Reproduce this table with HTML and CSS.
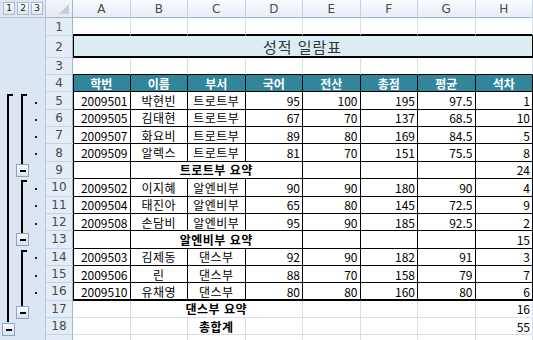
FILE: index.html
```html
<!DOCTYPE html>
<html lang="ko">
<head>
<meta charset="utf-8">
<title>성적 일람표</title>
<link rel="stylesheet" href="styles.css">
</head>
<body>
<div class="sheet">
  <!-- header row -->
  <div class="levels">
    <span class="lvl">1</span><span class="lvl">2</span><span class="lvl">3</span>
  </div>
  <div class="corner"><span class="tri"></span></div>
  <div class="ch">A</div><div class="ch">B</div><div class="ch">C</div><div class="ch">D</div>
  <div class="ch">E</div><div class="ch">F</div><div class="ch">G</div><div class="ch">H</div>

  <!-- outline drawing -->
  <div class="outline">
    <svg class="outline-svg" width="46" height="322" viewBox="0 0 46 322">
      <defs>
        <linearGradient id="btn" x1="0" y1="0" x2="0" y2="1">
          <stop offset="0" stop-color="#ffffff"/>
          <stop offset="1" stop-color="#d4e0ee"/>
        </linearGradient>
      </defs>
      <g fill="none" stroke="#000" stroke-width="2">
        <path d="M13 77 H8 V304"/>
        <path d="M27 77 H22 V146"/>
        <path d="M27 163 H22 V215"/>
        <path d="M27 233 H22 V288"/>
      </g>
      <g fill="#222">
        <rect x="35" y="84" width="2" height="2"/>
        <rect x="35" y="101" width="2" height="2"/>
        <rect x="35" y="118" width="2" height="2"/>
        <rect x="35" y="135" width="2" height="2"/>
        <rect x="35" y="170" width="2" height="2"/>
        <rect x="35" y="187" width="2" height="2"/>
        <rect x="35" y="205" width="2" height="2"/>
        <rect x="35" y="239" width="2" height="2"/>
        <rect x="35" y="257" width="2" height="2"/>
        <rect x="35" y="274" width="2" height="2"/>
      </g>
      <g>
        <rect x="16.5" y="146.5" width="12" height="12" fill="url(#btn)" stroke="#8aa4c4"/>
        <rect x="20" y="152" width="6" height="2" fill="#000"/>
        <rect x="16.5" y="215.5" width="12" height="12" fill="url(#btn)" stroke="#8aa4c4"/>
        <rect x="20" y="221" width="6" height="2" fill="#000"/>
        <rect x="16.5" y="288.5" width="12" height="12" fill="url(#btn)" stroke="#8aa4c4"/>
        <rect x="20" y="294" width="6" height="2" fill="#000"/>
        <rect x="2.5" y="305.5" width="12" height="12" fill="url(#btn)" stroke="#8aa4c4"/>
        <rect x="6" y="311" width="6" height="2" fill="#000"/>
      </g>
    </svg>
  </div>

  <!-- row 1 -->
  <div class="rh">1</div>
  <div class="c u2"></div><div class="c u2"></div><div class="c u2"></div><div class="c u2"></div>
  <div class="c u2"></div><div class="c u2"></div><div class="c u2"></div><div class="c u2"></div>

  <!-- row 2 -->
  <div class="rh">2</div>
  <div class="c title l k u2">성적 일람표</div>

  <!-- row 3 -->
  <div class="rh">3</div>
  <div class="c u"></div><div class="c u"></div><div class="c u"></div><div class="c u"></div>
  <div class="c u"></div><div class="c u"></div><div class="c u"></div><div class="c u"></div>

  <!-- row 4 -->
  <div class="rh">4</div>
  <div class="c hd l k u">학번</div><div class="c hd k u">이름</div><div class="c hd k u">부서</div><div class="c hd k u">국어</div>
  <div class="c hd k u">전산</div><div class="c hd k u">총점</div><div class="c hd k u">평균</div><div class="c hd k u">석차</div>

  <!-- row 5 -->
  <div class="rh">5</div>
  <div class="c r l k u">2009501</div><div class="c m k u">박현빈</div><div class="c m k u">트로트부</div><div class="c r k u">95</div>
  <div class="c r k u">100</div><div class="c r k u">195</div><div class="c r k u">97.5</div><div class="c r k u">1</div>

  <!-- row 6 -->
  <div class="rh">6</div>
  <div class="c r l k u">2009505</div><div class="c m k u">김태현</div><div class="c m k u">트로트부</div><div class="c r k u">67</div>
  <div class="c r k u">70</div><div class="c r k u">137</div><div class="c r k u">68.5</div><div class="c r k u">10</div>

  <!-- row 7 -->
  <div class="rh">7</div>
  <div class="c r l k u">2009507</div><div class="c m k u">화요비</div><div class="c m k u">트로트부</div><div class="c r k u">89</div>
  <div class="c r k u">80</div><div class="c r k u">169</div><div class="c r k u">84.5</div><div class="c r k u">5</div>

  <!-- row 8 -->
  <div class="rh">8</div>
  <div class="c r l k u">2009509</div><div class="c m k u">알렉스</div><div class="c m k u">트로트부</div><div class="c r k u">81</div>
  <div class="c r k u">70</div><div class="c r k u">151</div><div class="c r k u">75.5</div><div class="c r k u">8</div>

  <!-- row 9 -->
  <div class="rh">9</div>
  <div class="c l k u"></div><div class="c m bold span3 k u">트로트부 요약</div>
  <div class="c k u"></div><div class="c k u"></div><div class="c k u"></div><div class="c r k u">24</div>

  <!-- row 10 -->
  <div class="rh">10</div>
  <div class="c r l k u">2009502</div><div class="c m k u">이지혜</div><div class="c m k u">알엔비부</div><div class="c r k u">90</div>
  <div class="c r k u">90</div><div class="c r k u">180</div><div class="c r k u">90</div><div class="c r k u">4</div>

  <!-- row 11 -->
  <div class="rh">11</div>
  <div class="c r l k u">2009504</div><div class="c m k u">태진아</div><div class="c m k u">알엔비부</div><div class="c r k u">65</div>
  <div class="c r k u">80</div><div class="c r k u">145</div><div class="c r k u">72.5</div><div class="c r k u">9</div>

  <!-- row 12 -->
  <div class="rh">12</div>
  <div class="c r l k u">2009508</div><div class="c m k u">손담비</div><div class="c m k u">알엔비부</div><div class="c r k u">95</div>
  <div class="c r k u">90</div><div class="c r k u">185</div><div class="c r k u">92.5</div><div class="c r k u">2</div>

  <!-- row 13 -->
  <div class="rh">13</div>
  <div class="c l k u"></div><div class="c m bold span3 k u">알엔비부 요약</div>
  <div class="c k u"></div><div class="c k u"></div><div class="c k u"></div><div class="c r k u">15</div>

  <!-- row 14 -->
  <div class="rh">14</div>
  <div class="c r l k u">2009503</div><div class="c m k u">김제동</div><div class="c m k u">댄스부</div><div class="c r k u">92</div>
  <div class="c r k u">90</div><div class="c r k u">182</div><div class="c r k u">91</div><div class="c r k u">3</div>

  <!-- row 15 -->
  <div class="rh">15</div>
  <div class="c r l k u">2009506</div><div class="c m k u">린</div><div class="c m k u">댄스부</div><div class="c r k u">88</div>
  <div class="c r k u">70</div><div class="c r k u">158</div><div class="c r k u">79</div><div class="c r k u">7</div>

  <!-- row 16 -->
  <div class="rh">16</div>
  <div class="c r l k u2">2009510</div><div class="c m k u2">유채영</div><div class="c m k u2">댄스부</div><div class="c r k u2">80</div>
  <div class="c r k u2">80</div><div class="c r k u2">160</div><div class="c r k u2">80</div><div class="c r k u2">6</div>

  <!-- row 17 -->
  <div class="rh">17</div>
  <div class="c"></div><div class="c m bold span3">댄스부 요약</div>
  <div class="c"></div><div class="c"></div><div class="c"></div><div class="c r">16</div>

  <!-- row 18 -->
  <div class="rh">18</div>
  <div class="c"></div><div class="c"></div><div class="c m bold">총합계</div><div class="c"></div>
  <div class="c"></div><div class="c"></div><div class="c"></div><div class="c r">55</div>

  <!-- row 19 (partially visible) -->
  <div class="rh"></div>
  <div class="c"></div><div class="c"></div><div class="c"></div><div class="c"></div>
  <div class="c"></div><div class="c"></div><div class="c"></div><div class="c"></div>
</div>
</body>
</html>
```

FILE: styles.css
```css
* { box-sizing: border-box; }
html, body { margin: 0; padding: 0; background: #fff; }
body { width: 533px; height: 340px; overflow: hidden; }

.sheet {
  display: grid;
  grid-template-columns: 46px 27px repeat(8, 57.5px);
  grid-template-rows: 18px 18px 22px 17px repeat(15, 17.36px) 20px;
  width: 533px;
  height: 340px;
  overflow: hidden;
  font-family: "Noto Sans CJK KR", "Noto Sans", sans-serif;
  font-size: 12px;
  color: #000;
  background: #fff;
}

/* outline level buttons */
.levels {
  grid-column: 1;
  grid-row: 1;
  display: flex;
  gap: 2px;
  padding: 2px 0 0 3px;
  background: #dce6f3;
  border-right: 1px solid #b4c6dc;
  border-bottom: 1px solid #b4c6dc;
}
.lvl {
  width: 12px;
  height: 13px;
  border: 1px solid #a9bcd4;
  background: linear-gradient(#ffffff, #dbe4f0);
  font-family: "DejaVu Sans", sans-serif;
  font-size: 9px;
  line-height: 11px;
  text-align: center;
  color: #1b1b1b;
}

.outline {
  grid-column: 1;
  grid-row: 2 / -1;
  background: #dce6f3;
  border-right: 1px solid #b4c6dc;
}
.outline-svg { display: block; }

/* corner select-all */
.corner {
  grid-column: 2;
  grid-row: 1;
  position: relative;
  background: linear-gradient(#f4f7fb, #e3eaf4);
  border-right: 1px solid #9eb6ce;
  border-bottom: 1px solid #9eb6ce;
}
.tri {
  position: absolute;
  right: 3px;
  bottom: 3px;
  width: 0;
  height: 0;
  border-left: 10px solid transparent;
  border-bottom: 10px solid #c3cfdd;
}

/* column headers */
.ch {
  display: flex;
  align-items: center;
  justify-content: center;
  background: linear-gradient(#f9fbfd, #e6edf6);
  border-right: 1px solid #c5d2e3;
  border-bottom: 1px solid #9eb6ce;
  color: #4a4a4a;
  font-family: "DejaVu Sans", sans-serif;
  font-size: 12px;
}

/* row headers */
.rh {
  grid-column: 2;
  display: flex;
  align-items: center;
  justify-content: center;
  background: #e4ecf7;
  border-right: 1px solid #9eb6ce;
  border-bottom: 1px solid #c5d2e3;
  color: #4a4a4a;
  font-family: "DejaVu Sans", sans-serif;
  font-size: 12px;
}

/* cells */
.c {
  display: flex;
  align-items: center;
  padding: 0 2px;
  white-space: nowrap;
  overflow: hidden;
  border-right: 1px solid #d8dde6;
  border-bottom: 1px solid #d8dde6;
}
.r { justify-content: flex-end; }
.m { justify-content: center; letter-spacing: 0.5px; }
.bold { font-weight: bold; }
.span3 { grid-column: span 3; }

.k { border-right-color: #000; }
.u { border-bottom-color: #000; }
.u2 { border-bottom: 2px solid #000; }
.l { box-shadow: inset 1px 0 0 #000; }

.title {
  grid-column: 3 / 11;
  justify-content: center;
  background: #daeef3;
  font-size: 15px;
  color: #333;
  letter-spacing: 1px;
}

.hd {
  justify-content: center;
  background: #31869b;
  color: #fff;
  font-weight: bold;
}
```
